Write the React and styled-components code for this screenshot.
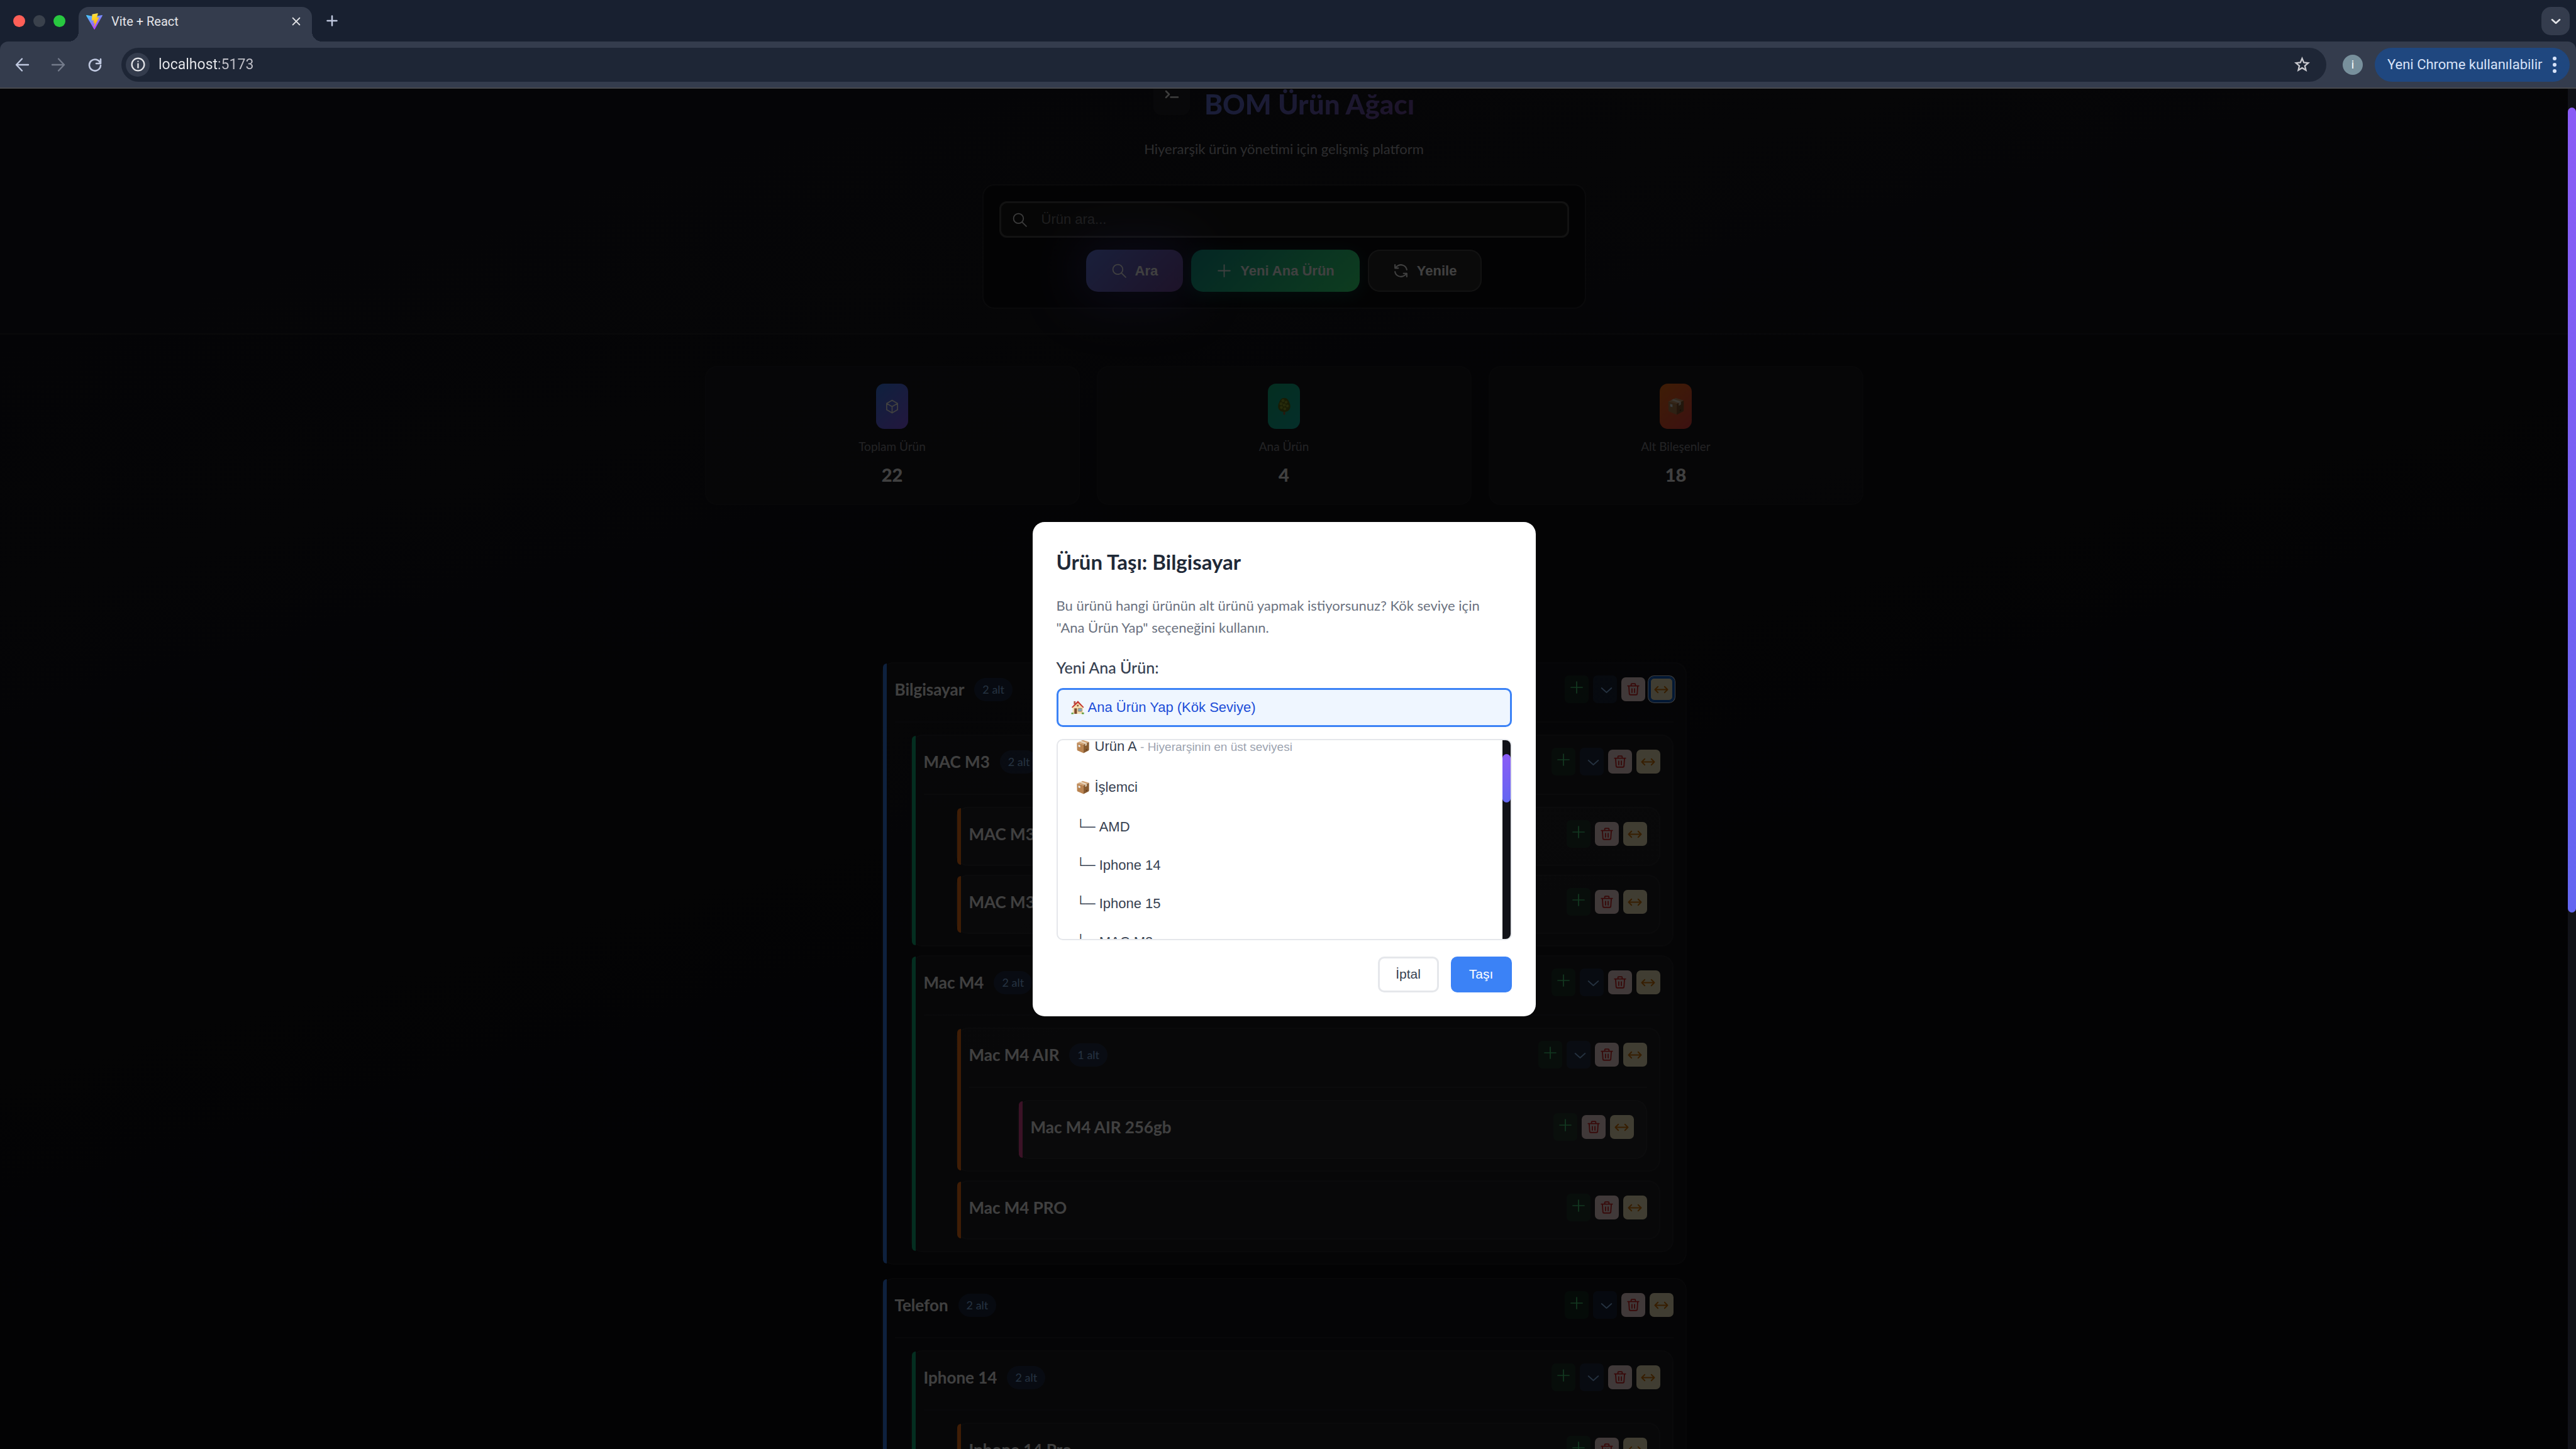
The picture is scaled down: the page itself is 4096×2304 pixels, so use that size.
import React, { useState } from "react";
import styled, { createGlobalStyle, css } from "styled-components";

const GlobalStyle = createGlobalStyle`
  *, *::before, *::after { box-sizing: border-box; }
  html, body { margin: 0; background: #000; }
  h1, h2, p { margin: 0; }
  button { border: 0; padding: 0; background: none; color: inherit; font-family: inherit; cursor: pointer; }
`;

const display = '"Lato", "Open Sans", sans-serif';
const plain = '"Liberation Sans", Arial, sans-serif';
const ui = '"Roboto", sans-serif';

const Icon = styled.svg.attrs({ fill: "none", stroke: "currentColor", strokeLinecap: "round", strokeLinejoin: "round" })`
  display: block;
  flex: none;
  width: ${(p) => p.$size || 24}px;
  height: ${(p) => p.$size || 24}px;
`;

/* ---------- browser frame ---------- */

const Browser = styled.div`
  height: 100vh;
  display: flex;
  flex-direction: column;
  font-family: ${ui};
  overflow: hidden;
`;

const Chrome = styled.header`
  flex: none;
  background: #182030;
  color: #e3e4e8;
`;

const TabStrip = styled.div`
  height: 66px;
  display: flex;
  align-items: flex-start;
  padding: 11px 10px 0 21px;
`;

const Lights = styled.div`
  display: flex;
  gap: 13px;
  padding-top: 13px;
  width: 104px;
`;

const Light = styled.span`
  width: 19px;
  height: 19px;
  border-radius: 50%;
  background: ${(p) => p.$color};
`;

const Tab = styled.div`
  position: relative;
  width: 371px;
  height: 55px;
  padding: 0 17px 10px 12px;
  display: flex;
  align-items: center;
  gap: 14px;
  background: #343c4d;
  border-radius: 16px 16px 0 0;
  font-size: 20px;

  &::before, &::after {
    content: "";
    position: absolute;
    bottom: 0;
    width: 16px;
    height: 16px;
  }
  &::before { left: -16px; background: radial-gradient(circle at 0 0, transparent 16px, #343c4d 16px); }
  &::after { right: -16px; background: radial-gradient(circle at 100% 0, transparent 16px, #343c4d 16px); }
`;

const TabTitle = styled.span`
  flex: 1;
`;

const NewTab = styled.button`
  margin-left: 22px;
  padding-top: 12px;
  color: #bfc8df;
`;

const TabSearch = styled.button`
  margin-left: auto;
  width: 45px;
  height: 45px;
  display: grid;
  place-items: center;
  border-radius: 15px;
  background: #343c4d;
`;

const Toolbar = styled.div`
  height: 75px;
  display: flex;
  align-items: center;
  padding: 0 10px 0 6px;
  background: #343c4d;
  border-bottom: 2px solid #47494d;
  border-radius: 13px 13px 0 0;
`;

const NavButton = styled.button`
  width: 58px;
  display: grid;
  place-items: center;
  color: ${(p) => (p.disabled ? "#747b8b" : "#bfc8df")};
`;

const AddressBar = styled.div`
  flex: 1;
  height: 54px;
  margin-left: 13px;
  padding: 0 26px 0 7px;
  display: flex;
  align-items: center;
  gap: 14px;
  border-radius: 27px;
  background: #1e2636;
`;

const SiteInfo = styled.button`
  width: 38px;
  height: 38px;
  display: grid;
  place-items: center;
  border-radius: 50%;
  background: #343c4d;
`;

const Address = styled.input`
  flex: 1;
  border: 0;
  padding: 0;
  font: 23px ${ui};
  color: transparent;
  background: linear-gradient(90deg, #e6e7eb 96px, #c1c1c9 96px);
  background-clip: text;
`;

const Avatar = styled.button`
  width: 32px;
  height: 32px;
  margin: 0 19px 0 26px;
  border-radius: 50%;
  background: #78909c;
  color: #fff;
  font-size: 18px;
`;

const UpdatePill = styled.button`
  height: 54px;
  width: 310px;
  padding: 0 20px;
  display: flex;
  align-items: center;
  justify-content: space-between;
  border-radius: 27px;
  background: #1f477f;
  color: #d7e2f8;
  font-size: 22px;
  white-space: nowrap;
`;

/* ---------- page ---------- */

const Viewport = styled.div`
  flex: 1;
  min-height: 0;
  display: flex;
`;

const Stage = styled.div`
  position: relative;
  flex: 1;
  overflow: hidden;
  background: linear-gradient(165deg, #121218 0%, #141419 25%, #0e0e13 60%, #0e0e13 100%);
`;

const Page = styled.div`
  margin-top: -16px;
  color: #fff;
  font-family: ${display};
`;

const PageHeader = styled.header`
  display: flex;
  flex-direction: column;
  align-items: center;
  padding-bottom: 39px;
  border-bottom: 2px solid rgba(255, 255, 255, 0.06);
  background: rgba(255, 255, 255, 0.02);
`;

const Brand = styled.div`
  display: flex;
  align-items: flex-start;
  gap: 23px;
`;

const Logo = styled.div`
  width: 58px;
  height: 58px;
  padding-bottom: 4px;
  display: grid;
  place-items: center;
  border-radius: 13px;
  background: rgba(255, 255, 255, 0.05);
`;

const Title = styled.h1`
  font-size: 44px;
  line-height: 80px;
  font-weight: 900;
  color: transparent;
  background: linear-gradient(135deg, #667eea, #764ba2);
  background-clip: text;
`;

const Subtitle = styled.p`
  margin-top: 14px;
  font-size: 22px;
  line-height: 36px;
  color: #b0b0b6;
`;

const SearchCard = styled.form`
  width: 960px;
  max-width: 100%;
  margin-top: 38px;
  padding: 25px;
  border: 2px solid rgba(255, 255, 255, 0.07);
  border-radius: 19px;
  background: rgba(0, 0, 0, 0.4);
  background-clip: padding-box;
  font-family: ${plain};
`;

const SearchField = styled.label`
  height: 58px;
  display: flex;
  align-items: center;
  gap: 22px;
  padding: 0 17px;
  border: 3px solid #4a4a4a;
  border-radius: 12px;
  background: #1b1b1b;
  color: #f0f0f0;
`;

const SearchInput = styled.input`
  flex: 1;
  border: 0;
  padding: 0;
  background: none;
  color: #fff;
  font: 22px/36px ${plain};
  &::placeholder { color: #777; opacity: 1; }
`;

const SearchActions = styled.div`
  display: flex;
  justify-content: center;
  gap: 13px;
  margin-top: 19px;
`;

const looks = {
  primary: css`
    background: linear-gradient(135deg, #667eea, #764ba2);
    box-shadow: 0 0 80px 16px rgba(102, 90, 234, 0.34);
  `,
  success: css`
    background: linear-gradient(135deg, #11998e, #38ef7d);
    box-shadow: 0 6px 26px rgba(17, 153, 142, 0.3);
  `,
  ghost: css`
    background: #2a2a2a;
    box-shadow: inset 0 0 0 2px #474747;
  `,
};

const ActionButton = styled.button`
  height: 67px;
  padding: 0 40px;
  display: flex;
  align-items: center;
  gap: 13px;
  border-radius: 19px;
  font-size: 22px;
  font-weight: 700;
  ${(p) => looks[p.$look]}
`;

const Stats = styled.section`
  width: 1842px;
  max-width: 100%;
  margin: 50px auto 0;
  display: grid;
  grid-template-columns: repeat(3, 1fr);
  gap: 27px;
`;

const StatCard = styled.article`
  display: flex;
  flex-direction: column;
  align-items: center;
  padding: 26px;
  border: 2px solid rgba(255, 255, 255, 0.05);
  border-radius: 19px;
  background: rgba(255, 255, 255, 0.03);
  background-clip: padding-box;
`;

const StatIcon = styled.div`
  width: 51px;
  height: 72px;
  display: grid;
  place-items: center;
  border-radius: 13px;
  background: linear-gradient(135deg, ${(p) => p.$from}, ${(p) => p.$to});
`;

const StatLabel = styled.p`
  margin-top: 13px;
  font-size: 19px;
  line-height: 30px;
  color: #8c8c94;
`;

const StatValue = styled.p`
  margin-top: 10px;
  font-size: 29px;
  line-height: 40px;
  font-weight: 900;
`;

const Tree = styled.main`
  width: 1280px;
  max-width: 100%;
  margin: 250px auto 0;
  display: flex;
  flex-direction: column;
  gap: 21px;
`;

const NodeCard = styled.section`
  position: relative;
  margin-left: ${(p) => p.$indent}px;
  padding: 19px 19px 18px;
  border: 2px solid rgba(255, 255, 255, 0.04);
  border-radius: 19px;
  background: rgba(255, 255, 255, 0.03);

  &::before {
    content: "";
    position: absolute;
    inset: 0 auto 0 0;
    width: 6px;
    border-radius: 6px 0 0 6px;
    background: ${(p) => p.$color};
  }
`;

const NodeHead = styled.div`
  height: 53px;
  padding-bottom: 9px;
  display: flex;
  align-items: center;
  gap: 16px;
`;

const NodeName = styled.h2`
  font-size: 26px;
  line-height: 36px;
  font-weight: 700;
  white-space: nowrap;
`;

const Badge = styled.span`
  height: 37px;
  padding: 0 13px;
  line-height: 37px;
  border-radius: 19px;
  background: rgba(59, 130, 246, 0.18);
  color: #93c5fd;
  font-size: 18px;
`;

const NodeActions = styled.div`
  margin-left: auto;
  display: flex;
  align-items: center;
  gap: 7px;
`;

const tones = {
  add: css`height: 44px; padding-bottom: 6px; background: rgba(34, 197, 94, 0.14); color: #4ade80;`,
  toggle: css`height: 44px; padding: 2px 0 0 6px; background: rgba(59, 130, 246, 0.16); color: #93c5fd;`,
  remove: css`height: 38px; background: #fee2e2; color: #dc2626;`,
  move: css`height: 38px; background: #fef3c7; color: #d97706;`,
};

const IconButton = styled.button`
  width: 38px;
  display: grid;
  place-items: center;
  border-radius: 7px;
  ${(p) => tones[p.$tone]}
  ${(p) => p.$focused && css`box-shadow: inset 0 0 0 2px #0b5fd0, 0 0 0 2px #0b5fd0, 0 0 0 3px #fff;`}
`;

const Children = styled.div`
  margin-top: 20px;
  padding-top: 19px;
  border-top: 2px solid rgba(255, 255, 255, 0.05);
  display: flex;
  flex-direction: column;
  gap: 14px;
`;

/* ---------- dialog ---------- */

const Overlay = styled.div`
  position: absolute;
  inset: 0;
  display: flex;
  align-items: center;
  justify-content: center;
  background: rgba(0, 0, 0, 0.75);
`;

const Dialog = styled.div`
  width: 800px;
  max-width: 100%;
  padding: 38px;
  border-radius: 19px;
  background: #fff;
  font-family: ${display};
  color: #374151;
`;

const DialogTitle = styled.h2`
  font-size: 33px;
  line-height: 51px;
  font-weight: 700;
  color: #1f2937;
`;

const DialogText = styled.p`
  margin-top: 26px;
  font-size: 22px;
  line-height: 35px;
  color: #6b7280;
`;

const DialogLabel = styled.p`
  margin-top: 26px;
  font-size: 25px;
  line-height: 40px;
  font-weight: 500;
`;

const RootOption = styled.button`
  width: 100%;
  height: 62px;
  margin-top: 13px;
  padding: 0 20px;
  display: flex;
  align-items: center;
  gap: 6px;
  border: 3px solid #3b82f6;
  border-radius: 10px;
  background: #eff6ff;
  color: #1d4ed8;
  font: 22px ${plain};
`;

const OptionBox = styled.div`
  height: 320px;
  margin-top: 19px;
  display: flex;
  border: 2px solid #e5e7eb;
  border-radius: 10px;
  overflow: hidden;
`;

const OptionList = styled.div`
  flex: 1;
  overflow: hidden;
`;

const Options = styled.div`
  margin-top: -22px;
`;

const Option = styled.button`
  width: 100%;
  height: ${(p) => (p.$root ? 65 : 61)}px;
  padding: 0 29px;
  display: flex;
  align-items: center;
  gap: ${(p) => (p.$root ? 8 : 6)}px;
  font: 22px ${plain};
  color: #374151;
  white-space: pre;
`;

const Hint = styled.small`
  font-size: 19px;
  color: #9ca3af;
`;

const ScrollTrack = styled.div`
  flex: none;
  width: 13px;
  padding-top: ${(p) => p.$top}px;
  background: #111218;
`;

const ScrollThumb = styled.div`
  height: ${(p) => p.$length};
  border-radius: 7px;
  background: linear-gradient(180deg, #8b5cf6, #6366f1);
`;

const DialogFooter = styled.div`
  margin-top: 26px;
  display: flex;
  justify-content: flex-end;
  gap: 19px;
`;

const DialogButton = styled.button`
  width: 97px;
  height: 57px;
  border-radius: 10px;
  font: 21px ${plain};
  border: 3px solid ${(p) => (p.$primary ? "#3b82f6" : "#e5e7eb")};
  background: ${(p) => (p.$primary ? "#3b82f6" : "#fff")};
  color: ${(p) => (p.$primary ? "#fff" : "#374151")};
`;

/* ---------- drawings ---------- */

const Drawing = styled.svg`
  display: block;
  flex: none;
`;

const ViteMark = () => (
  <Drawing width="26" height="26" viewBox="0 0 32 32">
    <defs>
      <linearGradient id="vite-a" x1="0" y1="0" x2="0.6" y2="1">
        <stop offset="0" stopColor="#41d1ff" />
        <stop offset="1" stopColor="#bd34fe" />
      </linearGradient>
      <linearGradient id="vite-b" x1="0.4" y1="0" x2="0.6" y2="1">
        <stop offset="0" stopColor="#ffea83" />
        <stop offset="0.1" stopColor="#ffdd35" />
        <stop offset="1" stopColor="#ffa800" />
      </linearGradient>
    </defs>
    <path fill="url(#vite-a)" d="M31.8 5 16.9 31.5a.8.8 0 0 1-1.4 0L.2 5a.8.8 0 0 1 .8-1.200l15 2.700 15-2.700a.8.8 0 0 1 .8 1.200Z" />
    <path fill="url(#vite-b)" d="m23 .1-11 2.100a.4.400 0 0 0-.3.400l-.7 11.500a.4.400 0 0 0 .5.400l3-.7c.3 0 .6.200.5.500l-1 4.500c0 .3.200.5.500.4l1.900-.5c.3-.1.600.2.500.5l-1.500 7c0 .4.500.6.700.3l9-18c.2-.3 0-.6-.4-.6l-3.200.7c-.3 0-.5-.2-.5-.5l2-7.200c.1-.3-.1-.6-.4-.5Z" />
  </Drawing>
);

const Magnifier = ({ size, width = 1.7 }) => (
  <Icon viewBox="0 0 24 24" $size={size} strokeWidth={width}>
    <circle cx="10" cy="10" r="7.500" />
    <path d="m15.500 15.500 6.500 6.500" />
  </Icon>
);

const PlusIcon = ({ size, width = 1.7 }) => (
  <Icon viewBox="0 0 24 24" $size={size} strokeWidth={width}>
    <path d="M12 3v18M3 12h18" />
  </Icon>
);

const ChevronIcon = ({ size, width = 2 }) => (
  <Icon viewBox="0 0 24 24" $size={size} strokeWidth={width}>
    <path d="m3 8 9 8 9-8" />
  </Icon>
);

const RefreshIcon = () => (
  <Icon viewBox="0 0 24 24" $size={25} strokeWidth="2">
    <path d="M3 3v5h5M3.500 8C6 3.500 11 2 15.500 3.700c3 1.200 5 3.800 5.500 6.800M21 21v-5h-5M20.500 16c-2.500 4.500-7.500 6-12 4.300-3-1.200-5-3.800-5.500-6.800" />
  </Icon>
);

const TrashIcon = () => (
  <Icon viewBox="0 0 24 24" $size={20} strokeWidth="2.200">
    <path d="M1.500 5.500h21M8 5.500V2.300c0-.6.400-1 1-1h6c.6 0 1 .4 1 1v3.200M3.500 5.500l1 15c.1 1.200.9 2 2.100 2h10.800c1.200 0 2-.8 2.100-2l1-15M9.500 11v7M14.500 11v7" />
  </Icon>
);

const MoveIcon = () => (
  <Icon viewBox="0 0 24 24" $size={23} strokeWidth="2">
    <path d="M1.500 12h21M6.500 7l-5 5 5 5M17.500 7l5 5-5 5" />
  </Icon>
);

const CubeIcon = () => (
  <Icon viewBox="0 0 24 24" $size={23} strokeWidth="1.800">
    <path d="M12 1.500 21 6.700v10.600L12 22.500 3 17.300V6.700ZM3 6.700l9 5.300 9-5.300M12 12v10.500" />
  </Icon>
);

const PackageEmoji = ({ size = 22 }) => (
  <Drawing width={size} height={size} viewBox="0 0 24 24">
    <path d="M1.500 5.500 13 8.500v15L2.800 19.200c-.7-.3-1-.8-1-1.500Z" fill="#b98350" />
    <path d="M13 8.500 22.500 4v13.500c0 .7-.3 1.200-.9 1.500L13 23.500Z" fill="#875a30" />
    <path d="M1.500 5.500 11.500.7 22.500 4 13 8.500Z" fill="#d2a274" />
    <path d="m5.500 3.600 3-1.400 10.300 3.500-3.100 1.500Z" fill="#eadbc6" />
    <path d="m15.700 7.200 3.100-1.500v4l-3.100 1.600Z" fill="#d4c2aa" />
    <path d="m4 8.800 3.200.9v3.500L4 12.300Z" fill="#e8eef2" />
    <path d="m17 17 2-1v2l-2 1Z" fill="#5d3c1e" />
  </Drawing>
);

const HouseEmoji = () => (
  <Drawing width="21" height="24" viewBox="0 0 24 26">
    <path d="M5 1.500h3.200V7H5Z" fill="#b4574a" />
    <path d="M3 12 12.500 3l9 9v12.500H3Z" fill="#f3dcae" />
    <path d="M12.500.8 1 12.300l1.600 1.400L12.500 4.600l9.400 9.100 1.500-1.400Z" fill="#c5372f" />
    <path d="M6 14.500h4.800v10H6Z" fill="#7d4a2c" />
    <path d="M13 14.500h6.500V20H13Z" fill="#6fb5e8" stroke="#a87a4c" />
    <path d="M16.200 14.500V20" stroke="#a87a4c" />
    <circle cx="12.300" cy="9.500" r="1.700" fill="#8b5a3a" />
    <path d="M.5 22.500h4V25h-4ZM19.500 22h4v3h-4Z" fill="#5d9b3a" />
  </Drawing>
);

const TreeEmoji = () => (
  <Drawing width="28" height="28" viewBox="0 0 28 28">
    <path d="M12.500 20h3v7.500h-3Z" fill="#9a6238" />
    <path d="M14 .8c4.500 0 7 3.500 8 7.200 2.500 4 2.200 8.500 0 11.500-2 2.800-5 3.300-8 3.300s-6-.5-8-3.300c-2.200-3-2.500-7.500 0-11.500 1-3.700 3.500-7.200 8-7.200Z" fill="#5f6f16" />
    <g fill="#97a628">
      <circle cx="12" cy="5" r="2.500" /><circle cx="17" cy="7.500" r="2.300" /><circle cx="9" cy="10" r="2.500" />
      <circle cx="14" cy="12" r="2.500" /><circle cx="19" cy="13.500" r="2.300" /><circle cx="9.500" cy="16" r="2.400" /><circle cx="15" cy="18" r="2.300" />
    </g>
  </Drawing>
);

/* ---------- data ---------- */

const depthColors = ["#3b82f6", "#10b981", "#f97316", "#ec4899"];
const depthIndents = [0, 25, 51, 77];

const products = [
  {
    name: "Bilgisayar",
    moving: true,
    children: [
      { name: "MAC M3", children: [{ name: "MAC M3" }, { name: "MAC M3" }] },
      {
        name: "Mac M4",
        children: [
          { name: "Mac M4 AIR", children: [{ name: "Mac M4 AIR 256gb" }] },
          { name: "Mac M4 PRO" },
        ],
      },
    ],
  },
  {
    name: "Telefon",
    badge: 2,
    children: [{ name: "Iphone 14", badge: 2, children: [{ name: "Iphone 14 Pro" }] }],
  },
];

const targets = [
  { name: "Ürün A", root: true, hint: "- Hiyerarşinin en üst seviyesi" },
  { name: "İşlemci", root: true },
  { name: "AMD" },
  { name: "Iphone 14" },
  { name: "Iphone 15" },
  { name: "MAC M3" },
];

const stats = [
  { label: "Toplam Ürün", value: 22, from: "#3b82f6", to: "#8b5cf6", icon: <CubeIcon /> },
  { label: "Ana Ürün", value: 4, from: "#10b981", to: "#14b8a6", icon: <TreeEmoji /> },
  { label: "Alt Bileşenler", value: 18, from: "#f97316", to: "#ef4444", icon: <PackageEmoji size={28} /> },
];

function ProductNode({ node, depth = 0 }) {
  const kids = node.children || [];
  return (
    <NodeCard $indent={depthIndents[depth]} $color={depthColors[depth]}>
      <NodeHead>
        <NodeName>{node.name}</NodeName>
        {kids.length > 0 && <Badge>{node.badge || kids.length} alt</Badge>}
        <NodeActions>
          <IconButton $tone="add" aria-label="Alt ürün ekle"><PlusIcon size={24} /></IconButton>
          {kids.length > 0 && (
            <IconButton $tone="toggle" aria-label="Aç/kapat"><ChevronIcon size={21} /></IconButton>
          )}
          <IconButton $tone="remove" aria-label="Sil"><TrashIcon /></IconButton>
          <IconButton $tone="move" $focused={node.moving} aria-label="Taşı"><MoveIcon /></IconButton>
        </NodeActions>
      </NodeHead>
      {kids.length > 0 && (
        <Children>
          {kids.map((kid, i) => <ProductNode key={i} node={kid} depth={depth + 1} />)}
        </Children>
      )}
    </NodeCard>
  );
}

function BrowserChrome() {
  return (
    <Chrome>
      <TabStrip>
        <Lights>
          <Light $color="#ff5f57" /><Light $color="#3a414c" /><Light $color="#28c840" />
        </Lights>
        <Tab>
          <ViteMark />
          <TabTitle>Vite + React</TabTitle>
          <button aria-label="Sekmeyi kapat">
            <Icon viewBox="0 0 24 24" $size={16} strokeWidth="3"><path d="M4 4l16 16M20 4 4 20" /></Icon>
          </button>
        </Tab>
        <NewTab aria-label="Yeni sekme"><PlusIcon size={20} width={3} /></NewTab>
        <TabSearch aria-label="Sekme ara"><ChevronIcon size={16} width={4} /></TabSearch>
      </TabStrip>
      <Toolbar>
        <NavButton aria-label="Geri">
          <Icon viewBox="0 0 24 24" $size={24} strokeWidth="2.400"><path d="M22 12H3M12 2.500 3 12l9 9.500" /></Icon>
        </NavButton>
        <NavButton aria-label="İleri" disabled>
          <Icon viewBox="0 0 24 24" $size={24} strokeWidth="2.400"><path d="M2 12h19M12 2.500l9 9.500-9 9.500" /></Icon>
        </NavButton>
        <NavButton aria-label="Yenile">
          <Icon viewBox="0 0 24 24" $size={24} strokeWidth="2.600"><path d="M21 3v7h-7M20.500 9.500A9 9 0 1 0 21 13" /></Icon>
        </NavButton>
        <AddressBar>
          <SiteInfo aria-label="Site bilgisi">
            <Icon viewBox="0 0 24 24" $size={25} strokeWidth="2.200">
              <circle cx="12" cy="12" r="9.500" /><path d="M12 11v6M12 7.300v.1" />
            </Icon>
          </SiteInfo>
          <Address aria-label="Adres" defaultValue="localhost:5173" />
          <Icon viewBox="0 0 24 24" $size={25} strokeWidth="2.200" color="#c9c9cf">
            <path strokeLinejoin="miter" d="m12 2.800 2.600 6.300 6.800.6-5.200 4.400 1.600 6.600-5.800-3.500-5.800 3.500 1.600-6.600-5.200-4.400 6.800-.6Z" />
          </Icon>
        </AddressBar>
        <Avatar aria-label="Profil">i</Avatar>
        <UpdatePill>
          Yeni Chrome kullanılabilir
          <Drawing width="8" height="30" viewBox="0 0 8 30" fill="currentColor">
            <circle cx="4" cy="5" r="3" /><circle cx="4" cy="15" r="3" /><circle cx="4" cy="25" r="3" />
          </Drawing>
        </UpdatePill>
      </Toolbar>
    </Chrome>
  );
}

export default function App() {
  const [query, setQuery] = useState("");
  return (
    <Browser>
      <GlobalStyle />
      <BrowserChrome />
      <Viewport>
        <Stage>
          <Page>
            <PageHeader>
              <Brand>
                <Logo>
                  <Icon viewBox="0 0 24 24" $size={24} strokeWidth="2.500" color="#f4f4f4">
                    <path d="m3 5 5 5-5 5M10.500 14.500H22" />
                  </Icon>
                </Logo>
                <Title>BOM Ürün Ağacı</Title>
              </Brand>
              <Subtitle>Hiyerarşik ürün yönetimi için gelişmiş platform</Subtitle>
              <SearchCard onSubmit={(e) => e.preventDefault()}>
                <SearchField>
                  <Magnifier size={25} />
                  <SearchInput
                    aria-label="Ürün ara"
                    placeholder="Ürün ara..."
                    value={query}
                    onChange={(e) => setQuery(e.target.value)}
                  />
                </SearchField>
                <SearchActions>
                  <ActionButton $look="primary" type="submit"><Magnifier size={25} />Ara</ActionButton>
                  <ActionButton $look="success" type="button"><PlusIcon size={25} />Yeni Ana Ürün</ActionButton>
                  <ActionButton $look="ghost" type="button"><RefreshIcon />Yenile</ActionButton>
                </SearchActions>
              </SearchCard>
            </PageHeader>
            <Stats>
              {stats.map((s) => (
                <StatCard key={s.label}>
                  <StatIcon $from={s.from} $to={s.to}>{s.icon}</StatIcon>
                  <StatLabel>{s.label}</StatLabel>
                  <StatValue>{s.value}</StatValue>
                </StatCard>
              ))}
            </Stats>
            <Tree>
              {products.map((p) => <ProductNode key={p.name} node={p} />)}
            </Tree>
          </Page>
          <Overlay>
            <Dialog role="dialog" aria-modal="true" aria-labelledby="move-title">
              <DialogTitle id="move-title">Ürün Taşı: Bilgisayar</DialogTitle>
              <DialogText>
                Bu ürünü hangi ürünün alt ürünü yapmak istiyorsunuz? Kök seviye için<br />
                "Ana Ürün Yap" seçeneğini kullanın.
              </DialogText>
              <DialogLabel id="move-label">Yeni Ana Ürün:</DialogLabel>
              <RootOption><HouseEmoji />Ana Ürün Yap (Kök Seviye)</RootOption>
              <OptionBox aria-labelledby="move-label" role="group">
                <OptionList>
                  <Options>
                    {targets.map((t) => (
                      <Option key={t.name} $root={t.root}>
                        {t.root ? <PackageEmoji /> : <span>└─</span>}
                        <span>{t.name}{t.hint && <Hint> {t.hint}</Hint>}</span>
                      </Option>
                    ))}
                  </Options>
                </OptionList>
                <ScrollTrack $top={22}><ScrollThumb $length="77px" /></ScrollTrack>
              </OptionBox>
              <DialogFooter>
                <DialogButton>İptal</DialogButton>
                <DialogButton $primary>Taşı</DialogButton>
              </DialogFooter>
            </Dialog>
          </Overlay>
        </Stage>
        <ScrollTrack $top={30}><ScrollThumb $length="60%" /></ScrollTrack>
      </Viewport>
    </Browser>
  );
}
